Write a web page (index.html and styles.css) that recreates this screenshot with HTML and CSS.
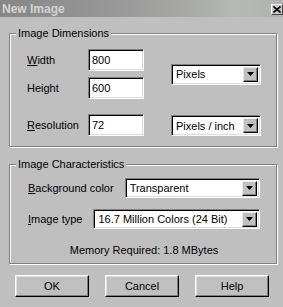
FILE: index.html
```html
<!DOCTYPE html>
<html lang="en">
<head>
    <meta charset="UTF-8">
    <meta name="viewport" content="width=device-width, initial-scale=1.0">
    <title>New Image</title>
    <link rel="stylesheet" href="styles.css">
</head>
<body>
    <div class="dialog">
        <div class="titlebar">
            <span class="title">New Image</span>
            <span class="close">
                <svg width="8" height="7" viewBox="0 0 8 7"><path d="M0.5 0.5L7.5 6.5M7.5 0.5L0.5 6.5" stroke="#000" stroke-width="1.6"/></svg>
            </span>
        </div>

        <div class="content">
            <fieldset class="group">
                <legend>Image Dimensions</legend>
                <div class="dims">
                    <label class="lbl" for="width"><u>W</u>idth</label>
                    <input class="field" type="text" id="width" value="800">
                    <div class="select units">Pixels<span class="arrow"><svg width="7" height="4" viewBox="0 0 7 4"><polygon points="0,0 7,0 3.5,4" fill="#000"/></svg></span></div>

                    <label class="lbl" for="height">Height</label>
                    <input class="field" type="text" id="height" value="600">

                    <label class="lbl last" for="res"><u>R</u>esolution</label>
                    <input class="field last" type="text" id="res" value="72">
                    <div class="select last">Pixels / inch<span class="arrow"><svg width="7" height="4" viewBox="0 0 7 4"><polygon points="0,0 7,0 3.5,4" fill="#000"/></svg></span></div>
                </div>
            </fieldset>

            <fieldset class="group second">
                <legend>Image Characteristics</legend>
                <div class="chars">
                    <div class="row">
                        <span class="lbl"><u>B</u>ackground color</span>
                        <div class="select wide">Transparent<span class="arrow"><svg width="7" height="4" viewBox="0 0 7 4"><polygon points="0,0 7,0 3.5,4" fill="#000"/></svg></span></div>
                    </div>
                    <div class="row">
                        <span class="lbl"><u>I</u>mage type</span>
                        <div class="select wide">16.7 Million Colors (24 Bit)<span class="arrow"><svg width="7" height="4" viewBox="0 0 7 4"><polygon points="0,0 7,0 3.5,4" fill="#000"/></svg></span></div>
                    </div>
                    <p class="memory">Memory Required: 1.8 MBytes</p>
                </div>
            </fieldset>

            <div class="buttons">
                <button class="btn" type="button">OK</button>
                <button class="btn" type="button">Cancel</button>
                <button class="btn" type="button">Help</button>
            </div>
        </div>
    </div>
</body>
</html>
```

FILE: styles.css
```css
body {
    margin: 0;
    font-family: "Liberation Sans", Arial, sans-serif;
    font-size: 11px;
    color: #000;
    background-color: #bfbfbf;
}

.dialog {
    width: 283px;
    height: 307px;
    background-color: #bfbfbf;
    overflow: hidden;
}

.titlebar {
    height: 17px;
    display: flex;
    align-items: center;
    justify-content: space-between;
    padding: 0 0 0 2px;
    background: linear-gradient(to right, #868686 0%, #9a9a9a 45%, #aeb0ac 75%, #b6bab4 82%, #b2b2b2 100%);
}

.title {
    font-weight: bold;
    font-size: 12px;
    color: #d4d4d4;
}

.close {
    width: 12px;
    height: 11px;
    margin-top: 2px;
    box-sizing: border-box;
    display: flex;
    align-items: center;
    justify-content: center;
    background-color: #c8c8c8;
    border: 1px solid;
    border-color: #fff #404040 #404040 #fff;
}

.content {
    padding: 10px 6px 0 9px;
}

.group {
    margin: 0;
    padding: 0;
    min-width: 0;
    border: 1px solid #808080;
    box-shadow: inset 1px 1px #fff, 1px 1px #fff;
}

.group legend {
    margin-left: 6px;
    padding: 0 2px;
    line-height: 13px;
    background-color: #bfbfbf;
}

.second {
    margin-top: 11px;
}

.dims {
    display: grid;
    grid-template-columns: 61px 56px 1fr;
    grid-template-rows: 22px 22px 31px;
    row-gap: 6px;
    padding: 9px 0 10px 17px;
}

.lbl {
    line-height: 22px;
    white-space: nowrap;
}

.last {
    align-self: end;
}

.field {
    width: 56px;
    height: 22px;
    box-sizing: border-box;
    margin: 0;
    padding: 0 0 0 3px;
    font: inherit;
    background-color: #fff;
    border: 1px solid;
    border-color: #808080 #fff #fff #808080;
    box-shadow: inset 1px 1px #000, inset -1px -1px #dcdcdc;
    outline: none;
}

.select {
    height: 21px;
    box-sizing: border-box;
    display: flex;
    align-items: center;
    padding-left: 4px;
    white-space: nowrap;
    background-color: #fff;
    border: 1px solid;
    border-color: #808080 #fff #fff #808080;
    box-shadow: inset 1px 1px #000, inset -1px -1px #dcdcdc;
}

.dims .select {
    width: 90px;
    margin-left: 27px;
}

.units {
    grid-column: 3;
    grid-row: 1 / span 2;
    align-self: center;
}

.arrow {
    margin-left: auto;
    margin-right: 2px;
    width: 15px;
    height: 15px;
    box-sizing: border-box;
    display: flex;
    align-items: center;
    justify-content: center;
    background-color: #c0c0c0;
    border: 1px solid;
    border-color: #e8e8e8 #000 #000 #e8e8e8;
    box-shadow: inset -1px -1px #808080;
}

.chars {
    padding: 7px 16px 6px 18px;
}

.row {
    display: flex;
    align-items: center;
    gap: 11px;
    height: 20px;
}

.row + .row {
    margin-top: 11px;
}

.wide {
    flex: 1;
    height: 20px;
}

.memory {
    margin: 15px 0 0;
    line-height: 13px;
    text-align: center;
}

.buttons {
    display: flex;
    gap: 16px;
    margin-top: 11px;
    padding-left: 6px;
}

.btn {
    width: 74px;
    height: 22px;
    padding: 0;
    font: inherit;
    color: #000;
    background-color: #c0c0c0;
    border: 1px solid;
    border-color: #fff #000 #000 #fff;
    box-shadow: inset -1px -1px #808080, inset 1px 1px #dfdfdf;
    cursor: pointer;
}
```
